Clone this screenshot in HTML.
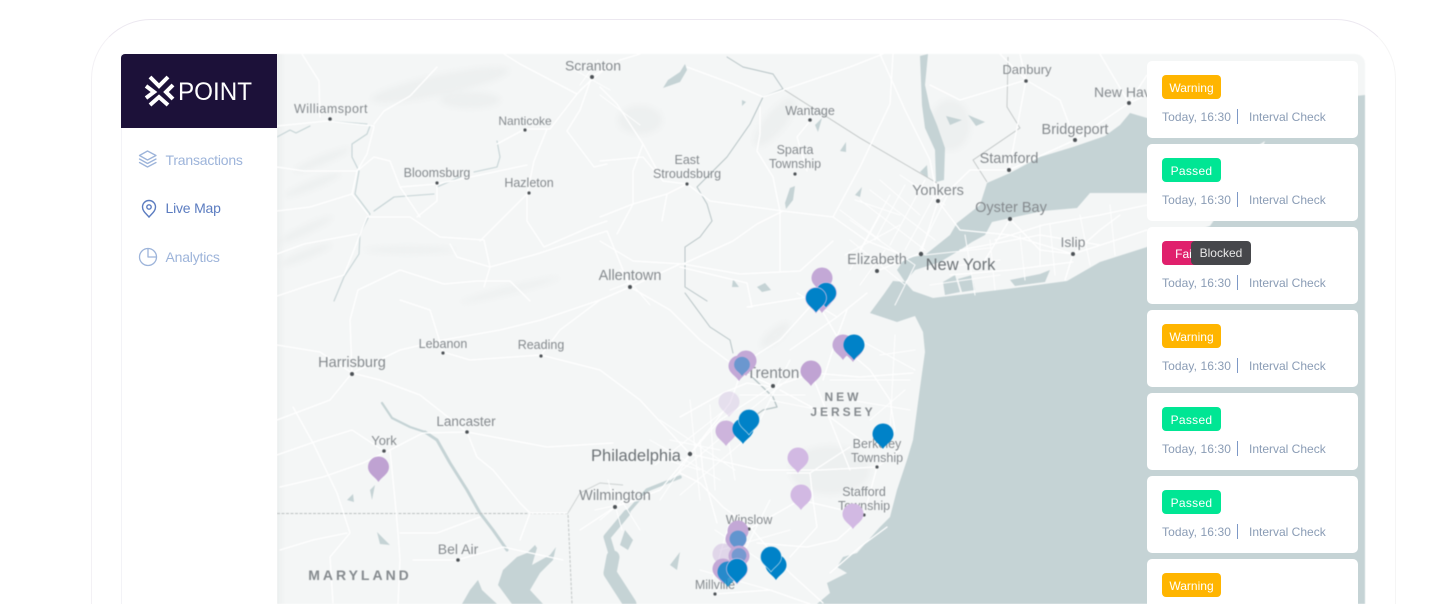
<!DOCTYPE html>
<html><head><meta charset="utf-8"><style>
html,body{margin:0;padding:0;width:1433px;height:604px;overflow:hidden;background:#fff;font-family:"Liberation Sans",sans-serif}
#wrap{position:relative;width:1433px;height:604px;overflow:hidden;background:#fff}
#frame{position:absolute;left:91px;top:19px;width:1305px;height:585px;border:1px solid #f3f1f5;border-bottom:none;border-top-color:#ece8f0;border-right-color:#f5f5f5;border-radius:60px 60px 0 0;box-sizing:border-box}
#map{position:absolute;left:0;top:0;width:1433px;height:604px;filter:blur(.45px);overflow:hidden}
#side{position:absolute;left:121px;top:54px;width:156px;height:550px;background:#fff;border-left:1px solid #f3f3f7;box-sizing:border-box}
#logo{position:absolute;left:121px;top:54px;width:156px;height:74px;background:#1c1139;border-top-left-radius:4px}
.nav{position:absolute;left:165.5px;font-size:14px;line-height:18px;color:#9db4da;letter-spacing:-.2px;filter:blur(.25px)}
.card{position:absolute;left:1147px;width:211px;height:77px;background:#fff;border-radius:5px}
.b{position:absolute;left:15px;top:14px;width:59px;height:24px;border-radius:4px;color:#fff;font-size:12px;line-height:26px;text-align:center;filter:blur(.2px)}
.d{position:absolute;left:15px;top:48px;font-size:12px;letter-spacing:.1px;line-height:16px;color:#8a9cb5;filter:blur(.2px)}
.s{position:absolute;left:90px;top:48px;width:1px;height:15px;background:#7d98c6}
.i{position:absolute;left:102px;top:48px;font-size:12px;line-height:16px;color:#8a9cb5;filter:blur(.2px)}
.w{background:#ffb500}.p{background:#00e694;letter-spacing:.3px}.f{background:#e0206c}
#tip{position:absolute;left:1191px;top:241px;width:60px;height:24px;background:#46474b;border-radius:4px;color:#e8e8e8;font-size:12px;line-height:25px;text-align:center}
</style></head><body><div id="wrap">
<div id="frame"></div>
<svg id="map" width="1433" height="604" viewBox="0 0 1433 604" font-family="'Liberation Sans',sans-serif">
<defs>
<clipPath id="c"><path d="M277 54H1355a10 10 0 0 1 10 10V604H277Z"/></clipPath>
<linearGradient id="sh" x1="0" x2="1"><stop offset="0" stop-color="#e6e9e9" stop-opacity=".7"/><stop offset="1" stop-color="#f3f5f5" stop-opacity="0"/></linearGradient>
<filter id="bl" x="-20%" y="-50%" width="140%" height="200%"><feGaussianBlur stdDeviation="3"/></filter>
<path id="m" d="M0 0C-3 -5 -10.500 -8 -10.500 -15A10.500 10.500 0 1 1 10.500 -15C10.500 -8 3 -5 0 0Z"/>
</defs>
<g clip-path="url(#c)">
<rect x="277" y="54" width="1088" height="550" fill="#f4f6f6"/>
<g fill="#e9ecec" filter="url(#bl)" opacity=".65">
<ellipse cx="440" cy="85" rx="70" ry="10" transform="rotate(-12 440 85)"/>
<ellipse cx="470" cy="100" rx="30" ry="8"/>
<ellipse cx="322" cy="160" rx="30" ry="4" transform="rotate(-22 322 160)"/>
<ellipse cx="312" cy="185" rx="30" ry="4" transform="rotate(-22 312 185)"/>
<ellipse cx="305" cy="230" rx="30" ry="4" transform="rotate(-25 305 230)"/>
<ellipse cx="305" cy="255" rx="28" ry="4" transform="rotate(-22 305 255)"/>
<ellipse cx="410" cy="250" rx="45" ry="3"/>
<ellipse cx="510" cy="290" rx="50" ry="3" transform="rotate(-14 510 290)"/>
<ellipse cx="640" cy="120" rx="22" ry="14"/>
<ellipse cx="950" cy="125" rx="20" ry="25"/>
<ellipse cx="775" cy="122" rx="10" ry="30" transform="rotate(40 775 122)"/>
<ellipse cx="775" cy="335" rx="18" ry="6" transform="rotate(-40 775 335)"/>
<ellipse cx="830" cy="470" rx="40" ry="24"/>
</g>
<rect x="277" y="54" width="10" height="550" fill="url(#sh)"/>
<!-- water -->
<g fill="#c5d3d5">
<path d="M1365 95L1147 118L1130 113L1120 125L1105 136L1073 147L1040 157L1010 173L987 183L980 205L957 223L950 235L925 255L905 258L897 270L905 282L893 281L884 294L870 313L897 322L915 316L923 332L925 352L919 395L913 440L907 460L897 490L890 517L880 527L857 553L843 557L837 567L847 573L827 583L830 593L817 604H1365Z"/>
<path d="M920 56L928 54L925 85L930 108L937 125L945 148L944 180L936 182L935 150L925 128L922 105Z"/>
<path d="M512 604L498 585L503 570L517 557L527 553L535 545L537 548L532 565L550 555L556 547L553 560L540 573L530 590L543 604Z"/>
<path d="M462 604L470 590L478 580L482 590L497 604Z"/>
<path d="M670 565L680 552L677 570Z"/>
<path d="M785 203L790 188L795 186L793 200L786 209Z"/><path d="M757 287L765 283L771 290L762 292Z"/><path d="M733 279L739 287L732 287Z"/>
<path d="M668 80L680 72L685 64L687 70L680 82L663 88Z"/>
<path d="M742 100L746 102L742 106Z"/><path d="M370 490L375 485L372 500Z"/><path d="M347 500L353 494L354 502Z"/>
<path d="M377 532L385 540L390 545L380 544Z"/><path d="M620 545L625 530L633 540L628 550Z"/>
<path d="M815 125L822 118L818 132Z"/><path d="M840 151L846 142L846 152Z"/><path d="M855 195L862 187L860 197Z"/>
<path d="M920 172L927 165L928 178Z"/><path d="M946 116L962 120L950 125Z"/><path d="M968 115L985 122L976 126Z"/>
</g>
<!-- Long Island -->
<path fill="#f4f6f6" d="M972 242L985 235L992 222L1043 211L1077 208L1090 193L1147 193L1220 170L1265 141L1262 150L1210 226L1147 247L1100 262L1067 281L1007 289L933 298L913 291L905 282L915 270L940 262L960 250Z"/>
<g fill="#c5d3d5"><path d="M943 282L955 275L960 292L945 295Z"/><path d="M958 279L972 275L975 290L962 292Z"/><path d="M1010 280L1040 274L1050 270L1045 282L1015 286Z"/></g>
<g fill="none" stroke="#c5d3d5" stroke-linecap="round" stroke-linejoin="round">
<path d="M382 403L392 418L410 427L425 432" stroke-width="2.200"/>
<path d="M425 432L437 440L450 463L467 490L480 513L493 530L507 550" stroke-width="3"/>
<path d="M370 126L367 134L352 144L352 157L359 171L355 194L370 214L360 234L359 254L344 277L334 301" stroke-width="1.100"/>
<path d="M374 211L394 197L434 194M437 187L460 177M474 172L497 167L500 157L497 141M277 137L290 130L296 133L310 126M327 121L367 124" stroke-width="1.100"/>
<path d="M680 477L647 490L627 513" stroke-width="3.500"/>
<path d="M627 513L607 537L613 557" stroke-width="7"/>
<path d="M613 557L610 573L630 604" stroke-width="13"/>
<path d="M727 57L743 67L773 74L783 89L763 97L750 124L727 157L697 187L707 204L712 221L700 237L685 247L685 287L707 301M685 293L710 327L730 340L733 353" stroke="#b6c3c5" stroke-width="1"/>
<path d="M748 373L773 397L777 407L763 410L752 418" stroke="#b6c3c5" stroke-width="1.300"/>
</g>
<!-- borders -->
<g fill="none" stroke="#bcc1c1" stroke-width=".9">
<path d="M277 513.500H568L572 604" stroke-dasharray="3 1.500"/>
<path d="M568 513L580 493L600 483L623 485" stroke="#ccd1d1"/>
<path d="M783 89L860 138L937 183M987 182L973 160L1020 128L1007 107L1008 57" stroke-width=".8"/>
</g>
<!-- roads -->
<g fill="none" stroke="#fff" stroke-linecap="round" stroke-linejoin="round" stroke-width="1.300">
<path d="M302 54L319 81L320 117M437 67L410 96L384 111L374 124M277 126L327 121L374 126M374 127L367 154L357 171L352 194L370 217"/>
<path d="M277 167L304 171L357 171L374 157L390 161L400 187L437 184M277 211L310 207L352 194M277 254L304 244L357 234M367 217L410 217L440 237L484 240L490 267L484 287"/>
<path d="M400 187L420 217M437 184L437 201L417 217M527 194L527 221L544 247L590 227L607 221M527 194L480 241M497 144L525 129L550 129L577 94L594 77M547 129L534 161L527 194M577 94L520 64L504 54M567 131L594 167L607 164"/>
<path d="M450 244L457 257L490 267L537 254L607 231M444 284L477 281L510 281L530 301M437 184L480 175L527 165"/>
<path d="M277 296L310 285L344 275L367 217M277 345L320 352L352 373M352 373L350 320L358 290L400 270L444 284"/>
<path d="M600 87L617 104L643 144L663 181L687 184M687 67L733 84L763 97L780 91L850 67L883 54M600 161L643 157L663 181M687 184L710 201L783 211L833 217L867 241L900 254M662 221L667 194L687 184"/>
<path d="M760 107L760 134L757 151L773 177L777 197L780 211M810 121L797 137L807 171M780 211L780 254L780 271M600 241L633 261L683 264L733 241L757 224L783 211M683 264L740 274L800 271L833 241M630 287L680 264M643 144L633 171L633 204L617 234M600 217L633 204L667 194M833 217L860 167L890 104L893 54"/>
<path d="M592 76L620 60L640 54M592 76L580 110L567 131M630 287L600 300L541 320L500 330L443 340L400 350L352 373L330 400L277 420M630 287L670 310L700 340L740 370L773 386M630 287L607 231"/>
<path d="M680 267L747 283L752 307L747 307L807 297M797 293L837 317M790 350L837 317L867 293M823 380L837 337L847 310M773 387L813 373L860 377L913 373M780 390L830 417L870 447M680 417L723 393L747 383L773 387"/>
<path d="M680 473L700 483L723 507L750 527L790 573L823 603M700 440L703 473L717 523M810 473L813 500L817 527L790 557M787 473L810 473L850 447M863 517L837 540L807 547L757 543M887 527L860 547L830 573"/>
<path d="M280 487L323 477L363 463L390 450L423 433L467 432L547 447L613 443M390 450L395 500L398 533L400 560L398 604M293 407L313 443L337 493L350 533L330 557L333 603M467 432L477 457L493 470L520 503L530 513L520 540M413 560L457 560L503 547L563 560M400 533L437 533L480 517M530 513L567 513M280 550L313 540L347 533"/>
<path d="M352 373L380 380L420 395L467 432M443 352L470 360L541 355L600 370L640 400L690 454M541 355L560 330L600 300M443 352L430 310L400 300M277 455L320 440L352 430L384 451"/>
<path d="M690 454L660 490L615 507L580 530M690 454L720 420L773 386M690 454L760 470L820 470L877 467L900 450M877 467L864 515M715 594L749 529M715 594L770 590L810 604M749 529L800 500L864 515"/>
<path d="M816 300L780 340L745 362M816 300L843 347L870 370L890 400L895 430L883 449M811 372L830 420L850 470M745 362L730 403L690 454"/>
<path d="M938 201L960 230L1010 235L1073 254L1147 230M938 201L970 170L1009 170L1075 140L1129 103L1147 95M938 201L921 253L877 271M938 201L930 160L905 110L880 54M1009 170L1026 80L1020 54M1075 140L1060 100L1026 80L1000 54M1129 103L1147 75M1100 54L1129 103M1026 80L960 100L930 85"/>
<path d="M1010 219L1040 250L1073 254L1065 280M1010 219L985 260M1073 254L1100 230L1120 215M960 250L1040 235L1100 245M950 275L1010 270L1073 262M1147 205L1100 215L1043 225L995 240"/>
</g>
<!-- dense urban -->
<g fill="none" stroke="#fff" stroke-linecap="round" stroke-width="1" opacity=".95">
<path d="M860 200L925 250M870 190L935 240M850 220L915 265M850 240L905 285M880 180L920 215M900 175L945 205M920 250L950 190M905 250L935 195M890 245L925 180M875 240L905 185M860 250L890 195M850 270L880 215M860 285L885 250M895 305L915 265M840 210L880 240M845 255L900 225M855 200L900 215"/>
<path d="M925 270L1000 260M925 255L990 248M930 285L1000 275M965 235L975 295M990 240L995 290M1020 235L1025 280M1050 225L1055 275M1080 215L1090 265M1110 205L1115 255M1040 225L1040 265"/>
<path d="M650 440L720 480M660 420L735 470M670 480L730 430M680 495L745 440M655 465L725 410M690 400L700 500M710 405L715 490M725 420L735 480M660 500L690 455M615 490L640 530M595 510L640 500M600 520L635 490M608 480L622 530M670 440L720 450M650 455L700 470"/>
<path d="M740 395L805 395M750 410L800 370M760 420L790 360M770 400L820 410M830 380L910 380M850 400L910 410M870 420L905 390M880 355L915 350M860 340L915 370M895 335L890 430"/>
<path d="M715 530L760 560M700 570L770 590M730 520L710 590M770 500L730 580M720 550L790 530"/>
<path d="M575 70L610 90M580 90L610 65M600 95L640 125M610 290L650 275M620 270L650 305M598 60L580 85"/>
</g>
<!-- labels -->
<g fill="#858a8e" font-size="13" text-anchor="middle">
<text x="593" y="70.500" font-size="14">Scranton</text>
<text x="331" y="113" font-size="12.500" letter-spacing=".5">Williamsport</text>
<text x="810" y="115" font-size="12.500">Wantage</text>
<text x="525" y="125" font-size="12">Nanticoke</text>
<text x="795" y="154" font-size="12.500">Sparta</text>
<text x="795" y="168" font-size="12.500">Township</text>
<text x="687" y="164" font-size="12.500">East</text>
<text x="687" y="178" font-size="12.500">Stroudsburg</text>
<text x="437" y="177" font-size="12.500">Bloomsburg</text>
<text x="529" y="187" font-size="12.500">Hazleton</text>
<text x="1027" y="74" font-size="13">Danbury</text>
<text x="1094" y="97" text-anchor="start" font-size="14">New Hav</text>
<text x="1075" y="134" font-size="14.500">Bridgeport</text>
<text x="1009" y="163" font-size="14.500">Stamford</text>
<text x="938" y="195" font-size="14.500">Yonkers</text>
<text x="1011" y="212" font-size="14.500">Oyster Bay</text>
<text x="1073" y="247" font-size="14">Islip</text>
<text x="877" y="264" font-size="14.500">Elizabeth</text>
<text x="960.500" y="270" font-size="16.500" fill="#6c7276">New York</text>
<text x="630" y="280" font-size="14.500">Allentown</text>
<text x="443" y="348" font-size="12.500">Lebanon</text>
<text x="541" y="349" font-size="12.500">Reading</text>
<text x="352" y="367" font-size="14.500">Harrisburg</text>
<text x="773" y="378" font-size="15.500">Trenton</text>
<text x="843" y="401" font-size="12" font-weight="bold" letter-spacing="3">NEW</text>
<text x="843" y="416" font-size="12" font-weight="bold" letter-spacing="3">JERSEY</text>
<text x="384" y="445" font-size="13">York</text>
<text x="466" y="426" font-size="13.500">Lancaster</text>
<text x="636" y="461" font-size="16.500" fill="#6c7276">Philadelphia</text>
<text x="615" y="500" font-size="14.500">Wilmington</text>
<text x="877" y="448" font-size="12.500">Berkeley</text>
<text x="877" y="462" font-size="12.500">Township</text>
<text x="864" y="496" font-size="12.500">Stafford</text>
<text x="864" y="510" font-size="12.500">Township</text>
<text x="749" y="524" font-size="12.500">Winslow</text>
<text x="458" y="554" font-size="14">Bel Air</text>
<text x="360" y="580" font-size="14" font-weight="bold" letter-spacing="3">MARYLAND</text>
<text x="715" y="589" font-size="12.500">Millville</text>
</g>
<g fill="#4d5256">
<circle cx="592" cy="77" r="2"/><circle cx="330" cy="119" r="1.800"/><circle cx="525" cy="130" r="1.600"/><circle cx="810" cy="120" r="1.800"/><circle cx="795" cy="174" r="1.600"/><circle cx="687" cy="184" r="1.600"/><circle cx="437" cy="183" r="1.600"/><circle cx="529" cy="193" r="1.600"/><circle cx="1026" cy="81" r="1.800"/><circle cx="1129" cy="103" r="2"/><circle cx="1075" cy="140" r="2"/><circle cx="1009" cy="170" r="2"/><circle cx="938" cy="201" r="2"/><circle cx="1010" cy="219" r="2"/><circle cx="1073" cy="254" r="2"/><circle cx="877" cy="271" r="2"/><circle cx="921" cy="254" r="2.200"/><circle cx="630" cy="287" r="2"/><circle cx="443" cy="353" r="1.600"/><circle cx="541" cy="356" r="1.600"/><circle cx="352" cy="374" r="2"/><circle cx="773" cy="386" r="2"/><circle cx="384" cy="451" r="1.800"/><circle cx="467" cy="432" r="1.800"/><circle cx="690" cy="454" r="2.200"/><circle cx="615" cy="507" r="2"/><circle cx="458" cy="560" r="1.800"/><circle cx="877" cy="467" r="1.600"/><circle cx="864" cy="515" r="1.600"/><circle cx="749" cy="529" r="1.600"/><circle cx="715" cy="594" r="1.600"/>
</g>
<!-- markers -->
<g>
<use href="#m" x="378.500" y="482" fill="#bfa2d2"/>
<use href="#m" x="822" y="293" fill="#c3a8d6"/>
<use href="#m" x="822" y="313" fill="#c3a8d6"/>
<use href="#m" x="826" y="308" fill="#0082c8" stroke="#d8c0e8" stroke-width=".7"/>
<use href="#m" x="816" y="313" fill="#0082c8" stroke="#d8c0e8" stroke-width=".7"/>
<use href="#m" x="843" y="360" fill="#c3a8d6"/>
<use href="#m" x="853" y="362" fill="#c3a8d6"/>
<use href="#m" x="854" y="360" fill="#0082c8"/>
<use href="#m" x="746" y="376" fill="#c3a8d6"/>
<use href="#m" x="739" y="381" fill="#c3a8d6"/>
<use href="#m" transform="translate(742 376) scale(.75)" fill="#0082c8" opacity=".45"/>
<use href="#m" x="811" y="386" fill="#c0a3d3"/>
<use href="#m" x="729" y="417" fill="#c3a8d6" opacity=".3"/>
<use href="#m" x="726" y="446" fill="#cdb4dc"/>
<use href="#m" x="743" y="444" fill="#0082c8"/>
<use href="#m" x="749" y="435" fill="#0082c8" stroke="#c9e0ee" stroke-width=".6"/>
<use href="#m" x="883" y="449" fill="#0082c8"/>
<use href="#m" x="798" y="473" fill="#d2b9e3"/>
<use href="#m" x="801" y="510" fill="#d2b9e3"/>
<use href="#m" x="853" y="529" fill="#d2b9e3"/>
<use href="#m" x="738" y="546" fill="#c3a8d6"/>
<use href="#m" x="736" y="554" fill="#c3a8d6"/>
<use href="#m" transform="translate(738 551) scale(.8)" fill="#0082c8" opacity=".5"/>
<use href="#m" x="723" y="569" fill="#c3a8d6" opacity=".4"/>
<use href="#m" x="739" y="571" fill="#c3a8d6"/>
<use href="#m" transform="translate(739 566) scale(.7)" fill="#0082c8" opacity=".4"/>
<use href="#m" x="723" y="584" fill="#c3a8d6"/>
<use href="#m" x="728" y="587" fill="#0082c8" opacity=".8"/>
<use href="#m" x="737" y="584" fill="#0082c8" stroke="#d8c0e8" stroke-width=".7"/>
<use href="#m" x="776" y="580" fill="#0082c8"/>
<use href="#m" x="771" y="572" fill="#0082c8" stroke="#c9e0ee" stroke-width=".6"/>
</g>
</g>
</svg>
<div id="side"></div>
<div id="logo"></div>
<svg style="position:absolute;left:0;top:0;filter:blur(.25px)" width="300" height="290" viewBox="0 0 300 290" font-family="'Liberation Sans',sans-serif">
<g fill="none" stroke="#fff" stroke-width="4">
<path d="M150 77L159 86L168 77"/>
<path d="M150 105L159 97L168 105"/>
<path d="M146 86L154 92L146 98"/>
<path d="M173 85L166 92L173 99"/>
</g>
<text x="178" y="100" font-size="25" fill="#fff" textLength="74" lengthAdjust="spacingAndGlyphs">POINT</text>
<g fill="none" stroke="#9db4da" stroke-width="1.300" stroke-linejoin="round" stroke-linecap="round">
<path d="M147.500 151L156 155.500L147.500 160L139.500 155.500Z"/>
<path d="M139.500 159L147.500 163.500L156 159"/>
<path d="M139.500 162.500L147.500 167L156 162.500"/>
<circle cx="148" cy="257" r="8.500"/>
<path d="M148 248.500V257H156.500"/>
</g>
<g fill="none" stroke="#5b7cc0" stroke-width="1.400">
<path d="M149 217C146 213.500 142.500 211 142.500 207A6.500 6.500 0 0 1 155.500 207C155.500 211 152 213.500 149 217Z"/>
<circle cx="149" cy="207" r="2.200"/>
</g>
</svg>
<div class="nav" style="top:151px">Transactions</div>
<div class="nav" style="top:199px;color:#5b7cc0">Live Map</div>
<div class="nav" style="top:248px">Analytics</div>
<div class="card" style="top:61px"><div class="b w">Warning</div><div class="d">Today, 16:30</div><div class="s"></div><div class="i">Interval Check</div></div>
<div class="card" style="top:144px"><div class="b p">Passed</div><div class="d">Today, 16:30</div><div class="s"></div><div class="i">Interval Check</div></div>
<div class="card" style="top:227px"><div class="b f">Failed</div><div class="d">Today, 16:30</div><div class="s"></div><div class="i">Interval Check</div></div>
<div class="card" style="top:310px"><div class="b w">Warning</div><div class="d">Today, 16:30</div><div class="s"></div><div class="i">Interval Check</div></div>
<div class="card" style="top:393px"><div class="b p">Passed</div><div class="d">Today, 16:30</div><div class="s"></div><div class="i">Interval Check</div></div>
<div class="card" style="top:476px"><div class="b p">Passed</div><div class="d">Today, 16:30</div><div class="s"></div><div class="i">Interval Check</div></div>
<div class="card" style="top:559px;height:45px;border-radius:5px 5px 0 0"><div class="b w">Warning</div></div>
<div id="tip">Blocked</div>
</div></body></html>
